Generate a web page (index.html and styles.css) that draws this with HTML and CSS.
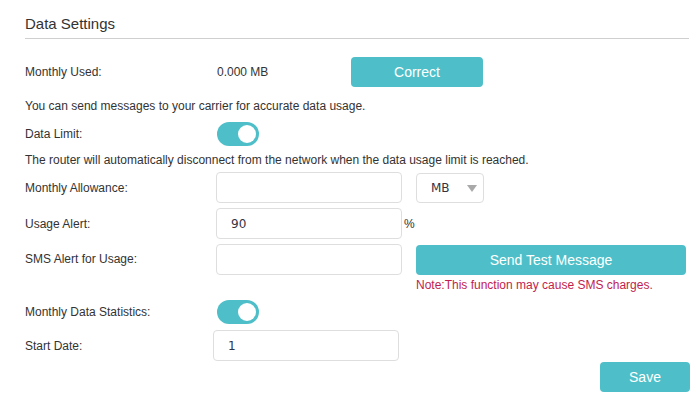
FILE: index.html
```html
<!DOCTYPE html>
<html lang="en">
<head>
<meta charset="utf-8">
<title>Data Settings</title>
<link rel="stylesheet" href="styles.css">
</head>
<body>
<div class="panel">
  <h2 class="title">Data Settings</h2>

  <div class="row row-used">
    <span class="label">Monthly Used:</span>
    <span class="value">0.000 MB</span>
    <button class="btn btn-correct">Correct</button>
  </div>

  <p class="hint hint-1">You can send messages to your carrier for accurate data usage.</p>

  <div class="row row-toggle">
    <span class="label">Data Limit:</span>
    <span class="toggle"><span class="knob"></span></span>
  </div>

  <p class="hint hint-2">The router will automatically disconnect from the network when the data usage limit is reached.</p>

  <div class="row row-input row-allow">
    <span class="label">Monthly Allowance:</span>
    <span class="field"></span>
    <span class="select">MB<span class="caret"></span></span>
  </div>

  <div class="row row-input">
    <span class="label">Usage Alert:</span>
    <span class="field">90</span>
    <span class="unit">%</span>
  </div>

  <div class="row row-input row-sms">
    <span class="label">SMS Alert for Usage:</span>
    <span class="field"></span>
    <div class="sms-side">
      <button class="btn btn-send">Send Test Message</button>
      <p class="note">Note:This function may cause SMS charges.</p>
    </div>
  </div>

  <div class="row row-toggle row-stats">
    <span class="label">Monthly Data Statistics:</span>
    <span class="toggle"><span class="knob"></span></span>
  </div>

  <div class="row row-input row-date">
    <span class="label">Start Date:</span>
    <span class="field field-date">1</span>
  </div>

  <div class="actions">
    <button class="btn btn-save">Save</button>
  </div>
</div>
</body>
</html>
```

FILE: styles.css
```css
html, body {
  margin: 0;
  padding: 0;
  background: #ffffff;
}

body {
  font-family: "Liberation Sans", Arial, sans-serif;
  font-size: 12px;
  color: #333333;
}

.panel {
  padding: 0 7px 0 25px;
}

.title {
  margin: 0;
  padding: 14px 0 5px 0;
  font-size: 15px;
  font-weight: normal;
  line-height: 19px;
  color: #333333;
  border-bottom: 1px solid #cfcfcf;
}

.row {
  display: flex;
  align-items: center;
}

.label {
  width: 191px;
  flex: none;
  line-height: 16px;
}

.row-used {
  margin-top: 18px;
  height: 30px;
}

.value {
  width: 134px;
  padding-left: 1px;
  flex: none;
  line-height: 16px;
}

.btn {
  border: none;
  border-radius: 4px;
  background: #4ebfc8;
  color: #ffffff;
  font-family: "Liberation Sans", Arial, sans-serif;
  font-size: 14px;
  padding: 0;
  height: 30px;
  cursor: pointer;
}

.btn-correct {
  width: 132px;
}

.hint {
  margin: 0;
  line-height: 16px;
}

.hint-1 {
  margin-top: 11px;
}

.hint-2 {
  margin-top: 6px;
}

.row-toggle {
  height: 24px;
  margin-top: 8px;
}

.toggle {
  display: flex;
  align-items: center;
  justify-content: flex-end;
  box-sizing: border-box;
  width: 42px;
  height: 24px;
  margin-left: 1px;
  padding-right: 3px;
  border-radius: 12px;
  background: #4ebfc8;
}

.knob {
  width: 18px;
  height: 18px;
  border-radius: 50%;
  background: #ffffff;
}

.row-input {
  margin-top: 5px;
}

.row-allow {
  margin-top: 4px;
}

.field {
  box-sizing: border-box;
  width: 186px;
  height: 31px;
  border: 1px solid #dedede;
  border-radius: 4px;
  padding-left: 14px;
  display: flex;
  align-items: center;
  font-family: "DejaVu Sans", Verdana, sans-serif;
  font-size: 12px;
  color: #333344;
  flex: none;
}

.select {
  box-sizing: border-box;
  width: 68px;
  height: 30px;
  margin-left: 14px;
  border: 1px solid #dedede;
  border-radius: 4px;
  padding-left: 14px;
  display: flex;
  align-items: center;
  font-family: "DejaVu Sans", Verdana, sans-serif;
  font-size: 12px;
  color: #333344;
  position: relative;
}

.caret {
  position: absolute;
  right: 6px;
  top: 11px;
  width: 0;
  height: 0;
  border-left: 5px solid transparent;
  border-right: 5px solid transparent;
  border-top: 7px solid #a9a9a9;
}

.unit {
  margin-left: 2px;
  line-height: 16px;
}

.row-sms {
  align-items: flex-start;
}

.row-sms .label {
  line-height: 31px;
}

.sms-side {
  margin-left: 14px;
  display: flex;
  flex-direction: column;
}

.btn-send {
  width: 270px;
  margin-top: 1px;
}

.note {
  margin: 2px 0 0 0;
  line-height: 16px;
  color: #c21d4e;
}

.row-stats {
  margin-top: 7px;
}

.row-date {
  margin-top: 6px;
}

.field-date {
  margin-left: -3px;
}

.actions {
  display: flex;
  justify-content: flex-end;
  margin-top: 1px;
}

.btn-save {
  width: 90px;
  margin-right: -1px;
}
```
